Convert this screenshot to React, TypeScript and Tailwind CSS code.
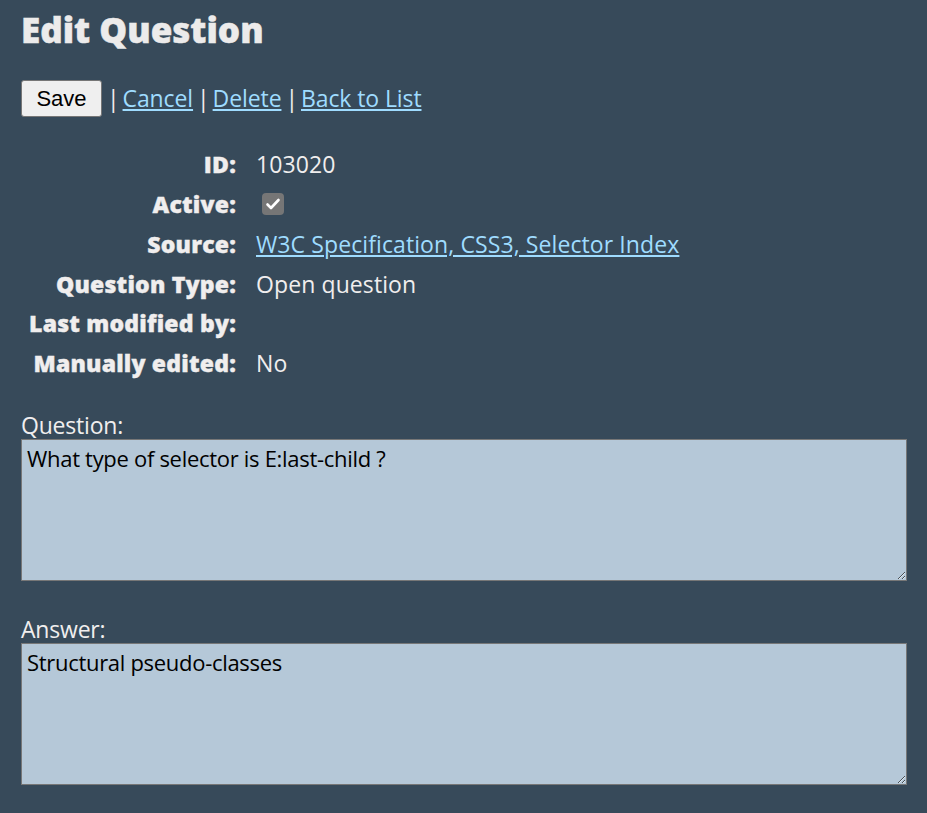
import React from "react";

const font = { fontFamily: '"Open Sans", "Noto Sans", sans-serif' };

function Label({ children }: { children: React.ReactNode }) {
  return (
    <div className="w-[215px] text-right font-extrabold text-[23px] tracking-[0.2px] text-[#f0eeee] whitespace-nowrap" style={{ WebkitTextStroke: "0.4px #f0eeee" }}>
      {children}
    </div>
  );
}

function Row({ label, children }: { label: string; children?: React.ReactNode }) {
  return (
    <div className="flex items-center h-[40px]">
      <Label>{label}</Label>
      <div className="ml-[20px] text-[23px] text-[#f0eeee] flex items-center tracking-[0.1px]">{children}</div>
    </div>
  );
}

export default function App() {
  return (
    <div className="min-h-[813px] bg-[#374a5a] px-[21px] pt-[6px] pb-[20px]" style={font}>
      <h1 className="text-[35px] font-extrabold text-[#ecebeb] leading-[48px] tracking-[0px]" style={{ WebkitTextStroke: "0.5px #ecebeb" }}>Edit Question</h1>
      <div className="mt-[25px] flex items-center text-[23px] text-[#f0eeee] h-[38px] tracking-[-0.1px]">
        <button className="h-[37px] w-[81px] bg-[#efefef] border border-[#767676] rounded-[3px] text-black text-[22px] tracking-normal" style={{ fontFamily: '"Liberation Sans", Arial, sans-serif' }}>Save</button>
        <span className="ml-[5px]">|</span>
        <a href="#" className="ml-[3px] text-[#9fdcff] underline">Cancel</a>
        <span className="ml-[4px]">|</span>
        <a href="#" className="ml-[3px] text-[#9fdcff] underline">Delete</a>
        <span className="ml-[4px]">|</span>
        <a href="#" className="ml-[3px] text-[#9fdcff] underline">Back to List</a>
      </div>
      <div className="mt-[27px]">
        <Row label="ID:">103020</Row>
        <Row label="Active:">
          <span className="ml-[6px] w-[22px] h-[22px] rounded-[4px] bg-[#767676] flex items-center justify-center">
            <svg width="16" height="16" viewBox="0 0 16 16">
              <path d="M2.5 8.5 L6 12 L13.5 4" stroke="white" strokeWidth="2.6" fill="none" strokeLinecap="round" strokeLinejoin="round" />
            </svg>
          </span>
        </Row>
        <Row label="Source:">
          <a href="#" className="text-[#9fdcff] underline">W3C Specification, CSS3, Selector Index</a>
        </Row>
        <Row label="Question Type:">Open question</Row>
        <div className="h-[39px] flex items-center">
          <Label>Last modified by:</Label>
        </div>
        <Row label="Manually edited:">No</Row>
      </div>
      <div className="mt-[28px]">
        <div className="text-[23px] text-[#f0eeee] leading-[28px] tracking-[-0.2px]">Question:</div>
        <textarea
          className="block w-[886px] h-[142px] bg-[#b5c8d8] border border-[#777] text-[22px] text-black px-[5px] py-[2px] resize-y outline-none tracking-[-0.3px]"
          style={font}
          defaultValue="What type of selector is E:last-child ?"
        />
      </div>
      <div className="mt-[34px]">
        <div className="text-[23px] text-[#f0eeee] leading-[28px] tracking-[-0.2px]">Answer:</div>
        <textarea
          className="block w-[886px] h-[142px] bg-[#b5c8d8] border border-[#777] text-[22px] text-black px-[5px] py-[2px] resize-y outline-none tracking-[-0.3px]"
          style={font}
          defaultValue="Structural pseudo-classes"
        />
      </div>
    </div>
  );
}
